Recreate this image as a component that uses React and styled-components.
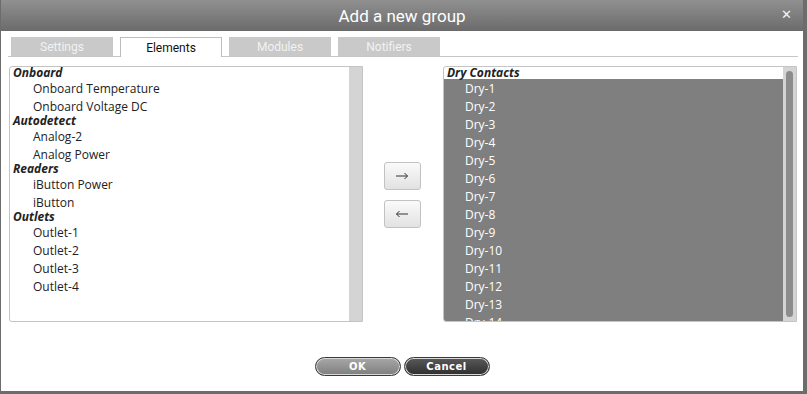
import React from 'react';
import styled, { createGlobalStyle } from 'styled-components';

const GlobalStyle = createGlobalStyle`
  html, body {
    margin: 0;
    padding: 0;
    background: #6c6c6c;
  }
  body {
    font-family: "Open Sans", "DejaVu Sans", sans-serif;
  }
`;

const leftGroups = [
  { label: 'Onboard', items: ['Onboard Temperature', 'Onboard Voltage DC'] },
  { label: 'Autodetect', items: ['Analog-2', 'Analog Power'] },
  { label: 'Readers', items: ['iButton Power', 'iButton'] },
  { label: 'Outlets', items: ['Outlet-1', 'Outlet-2', 'Outlet-3', 'Outlet-4'] },
];

const rightGroups = [
  {
    label: 'Dry Contacts',
    items: Array.from({ length: 16 }, (_, i) => `Dry-${i + 1}`),
    selected: true,
  },
];

const tabs = ['Settings', 'Elements', 'Modules', 'Notifiers'];

const Dialog = styled.div`
  margin-left: 1px;
  width: 802px;
  height: 391px;
  background: #fff;
  display: flex;
  flex-direction: column;
`;

const TitleBar = styled.div`
  height: 31px;
  background: linear-gradient(#909090, #6b6b6b);
  display: flex;
  align-items: center;
  justify-content: center;
  position: relative;
  color: #fff;
  font-family: "Liberation Sans Narrow", "Roboto", sans-serif;
  font-size: 17px;
`;

const Close = styled.span`
  position: absolute;
  right: 11px;
  top: 7px;
  font-size: 13px;
  font-family: "DejaVu Sans", sans-serif;
  color: #f4f4f4;
`;

const TabRow = styled.div`
  display: flex;
  margin: 6px 5px 0 7px;
  padding-left: 3px;
  border-bottom: 1px solid #c6c6c6;
  gap: 7px;
`;

const Tab = styled.div`
  width: 102px;
  box-sizing: border-box;
  display: flex;
  align-items: center;
  justify-content: center;
  font-family: "Liberation Sans Narrow", "Roboto", sans-serif;
  font-size: 12px;
  background: ${p => (p.$active ? '#fff' : '#c9c9c9')};
  color: ${p => (p.$active ? '#111' : '#f2f2f2')};
  border: 1px solid ${p => (p.$active ? '#bdbdbd' : '#c9c9c9')};
  border-bottom: none;
  margin-bottom: ${p => (p.$active ? '-1px' : '0')};
  height: ${p => (p.$active ? '20px' : '19px')};
`;

const Body = styled.div`
  display: grid;
  grid-template-columns: 354px 80px 354px;
  padding: 9px 0 0 8px;
`;

const ListBox = styled.div`
  height: 256px;
  box-sizing: border-box;
  border: 1px solid #c4c4c4;
  border-radius: 3px 0 0 3px;
  display: flex;
  overflow: hidden;
`;

const ListContent = styled.div`
  flex: 1;
  overflow: hidden;
`;

const GroupLabel = styled.div`
  height: 12px;
  line-height: 11px;
  padding-left: 3px;
  font-weight: bold;
  font-style: italic;
  font-size: 12px;
  color: #222;
`;

const Option = styled.div`
  height: 18px;
  box-sizing: border-box;
  padding: 2px 0 0 ${p => (p.$selected ? '21px' : '23px')};
  line-height: 16px;
  font-size: 12px;
  color: ${p => (p.$selected ? '#fff' : '#222')};
  background: ${p => (p.$selected ? '#7f7f7f' : 'transparent')};
`;

const Track = styled.div`
  width: 13px;
  background: #d4d4d4;
  display: flex;
  justify-content: center;
  padding-top: 4px;
`;

const Thumb = styled.div`
  width: 7px;
  height: 246px;
  border-radius: 4px;
  background: #8c8c8c;
`;

const Arrows = styled.div`
  display: flex;
  flex-direction: column;
  align-items: center;
  gap: 10px;
  padding: 96px 2px 0 0;
`;

const ArrowButton = styled.button`
  width: 37px;
  height: 28px;
  padding: 0;
  border: 1px solid #c2c2c2;
  border-radius: 3px;
  background: linear-gradient(#fafafa, #e2e2e2);
  display: flex;
  align-items: center;
  justify-content: center;
  color: #333;
`;

const Footer = styled.div`
  display: flex;
  justify-content: center;
  gap: 3px;
  padding: 35px 0 0 0;
`;

const PillButton = styled.button`
  width: 86px;
  height: 19px;
  border-radius: 10px;
  border: 1px solid #3a3a3a;
  box-shadow: inset 0 0 0 1px #d8d8d8;
  background: ${p =>
    p.$dark ? 'linear-gradient(#5a5a5a, #2e2e2e)' : 'linear-gradient(#a8a8a8, #7e7e7e)'};
  color: #fff;
  font-family: "DejaVu Sans", Verdana, sans-serif;
  font-weight: bold;
  font-size: 10px;
  letter-spacing: 0.5px;
  padding: 0;
`;

const Arrow = ({ left }) => (
  <svg width="14" height="8" viewBox="0 0 14 8">
    <path
      d={left ? 'M13 4H1.5M4.5 1L1.5 4L4.5 7' : 'M1 4H12.5M9.5 1L12.5 4L9.5 7'}
      fill="none"
      stroke="#333"
      strokeWidth="1"
    />
  </svg>
);

const List = ({ groups, scroll }) => (
  <ListBox>
    <ListContent>
      {groups.map(g => (
        <React.Fragment key={g.label}>
          <GroupLabel>{g.label}</GroupLabel>
          {g.items.map(item => (
            <Option key={item} $selected={g.selected}>{item}</Option>
          ))}
        </React.Fragment>
      ))}
    </ListContent>
    <Track>{scroll ? <Thumb /> : null}</Track>
  </ListBox>
);

export default function App() {
  return (
    <>
      <GlobalStyle />
      <Dialog>
        <TitleBar>
          Add a new group
          <Close>✕</Close>
        </TitleBar>
        <TabRow>
          {tabs.map(t => (
            <Tab key={t} $active={t === 'Elements'}>{t}</Tab>
          ))}
        </TabRow>
        <Body>
          <List groups={leftGroups} />
          <Arrows>
            <ArrowButton><Arrow /></ArrowButton>
            <ArrowButton><Arrow left /></ArrowButton>
          </Arrows>
          <List groups={rightGroups} scroll />
        </Body>
        <Footer>
          <PillButton>OK</PillButton>
          <PillButton $dark>Cancel</PillButton>
        </Footer>
      </Dialog>
    </>
  );
}
